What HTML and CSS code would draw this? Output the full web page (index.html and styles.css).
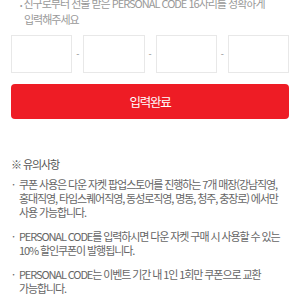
FILE: index.html
```html
<!DOCTYPE html>
<html lang="ko">

<head>
    <meta charset="UTF-8">
    <meta name="viewport" content="width=device-width, initial-scale=1.0">
    <title>PERSONAL CODE</title>
    <link rel="stylesheet" href="styles.css">
</head>

<body>
    <div class="page">
        <p class="guide"><span class="dot">•</span> 친구로부터 선물 받은 PERSONAL CODE 16자리를 정확하게 입력해주세요</p>

        <div class="code-row">
            <input class="code-box" type="text" maxlength="4">
            <span class="dash">-</span>
            <input class="code-box" type="text" maxlength="4">
            <span class="dash">-</span>
            <input class="code-box" type="text" maxlength="4">
            <span class="dash">-</span>
            <input class="code-box" type="text" maxlength="4">
        </div>

        <button class="submit-btn" type="button">입력완료</button>

        <div class="notice">
            <h3 class="notice-title">※ 유의사항</h3>
            <ul class="notice-list">
                <li><span class="mark">·</span><p>쿠폰 사용은 다운 자켓 팝업스토어를 진행하는 7개 매장(강남직영, 홍대직영, 타임스퀘어직영, 동성로직영, 명동, 청주, 충장로) 에서만 사용 가능합니다.</p></li>
                <li><span class="mark">·</span><p>PERSONAL CODE를 입력하시면 다운 자켓 구매 시 사용할 수 있는 10% 할인쿠폰이 발행됩니다.</p></li>
                <li><span class="mark">·</span><p>PERSONAL CODE는 이벤트 기간 내 1인 1회만 쿠폰으로 교환 가능합니다.</p></li>
            </ul>
        </div>
    </div>
</body>

</html>
```

FILE: styles.css
```css
* {
    margin: 0;
    padding: 0;
    box-sizing: border-box;
    list-style: none;
}

body {
    background: #fff;
    font-family: "Noto Sans CJK KR", "Noto Sans", sans-serif;
    color: #666;
    word-break: keep-all;
}

.page {
    margin-top: -4px;
    padding: 0 11px;
}

.guide {
    padding-left: 13px;
    padding-right: 20px;
    text-indent: -4px;
    font-size: 11px;
    line-height: 14px;
    letter-spacing: -1px;
    color: #999;
}

.guide .dot {
    font-size: 7px;
}

.code-row {
    display: flex;
    align-items: center;
    margin-top: 9px;
}

.code-box {
    flex: 1;
    min-width: 0;
    height: 38px;
    border: 1px solid #e8e8e8;
    background: #fff;
}

.dash {
    width: 11px;
    text-align: center;
    font-size: 9px;
    color: #888;
}

.submit-btn {
    display: block;
    width: 100%;
    height: 35px;
    margin-top: 11px;
    border: none;
    border-radius: 4px;
    background: #ee1c25;
    color: #fff;
    font-family: inherit;
    font-size: 12.5px;
    letter-spacing: -1.2px;
}

.notice {
    margin-top: 38px;
}

.notice-title {
    font-size: 11px;
    font-weight: normal;
    line-height: 14px;
    letter-spacing: -1.1px;
    color: #555;
}

.notice-list {
    margin-top: 6px;
}

.notice-list li {
    display: flex;
    margin-bottom: 10px;
    font-size: 11px;
    line-height: 14px;
    letter-spacing: -1.1px;
}

.notice-list .mark {
    width: 8px;
    flex-shrink: 0;
    padding-left: 1px;
}
```
